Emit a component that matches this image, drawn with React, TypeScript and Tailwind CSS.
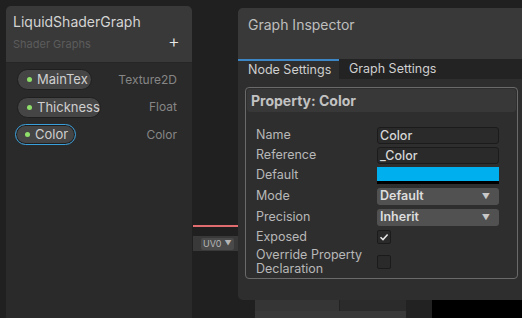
import React from "react";

const font = { fontFamily: "Inter, 'Noto Sans', sans-serif" };

function Pill({ name, w, selected }: { name: string; w: number; selected?: boolean }) {
  return (
    <div
      className={
        "flex items-center h-[21px] rounded-full bg-[#454545] pl-[9px] " +
        (selected ? "border border-[#3aa0dc] shadow-[0_0_0_1px_#1e1e1e_inset]" : "border border-[#1f1f1f]")
      }
      style={{ width: w }}
    >
      <span className="w-[5px] h-[5px] shrink-0 rounded-full bg-[#8fe06a] mr-[5px]" />
      <span className="text-[13px] text-[#cfcfcf] leading-none">{name}</span>
    </div>
  );
}

function Row({ label, children, h = 20, top }: { label: React.ReactNode; children: React.ReactNode; h?: number; top?: boolean }) {
  return (
    <div className={"flex " + (top ? "items-start" : "items-center")} style={{ height: h }}>
      <div className="w-[121px] text-[12.5px] leading-[14px] text-[#b8b8b8]">{label}</div>
      <div className="w-[122px]">{children}</div>
    </div>
  );
}

export default function App() {
  return (
    <div className="relative w-[522px] h-[318px] overflow-hidden bg-[#202020]" style={font}>
      {/* underlying graph canvas pieces */}
      <div className="absolute left-[193px] top-[225px] w-[45px] h-[2px] bg-[#e06c70]" />
      <div className="absolute left-[193px] top-[236px] w-[45px] h-[15px] bg-[#393939] flex items-center pl-[8px]">
        <div className="flex items-center h-[12px] px-[2px] bg-[#4a4a4a] rounded-[2px] text-[9px] text-[#b5b5b5] leading-none">
          UV0<span className="ml-[3px] text-[7px]">▼</span>
        </div>
      </div>
      <div className="absolute left-[255px] top-[300px] w-[177px] h-[18px] bg-[#222]">
        <div className="flex h-[11px]">
          <div className="w-[84px] bg-[#353535]" />
          <div className="w-[1px] bg-[#222]" />
          <div className="w-[66px] bg-[#2b2b2b]" />
        </div>
        <div className="w-[151px] h-[7px] bg-[#393939]" />
      </div>
      <div className="absolute left-[432px] top-[300px] w-[90px] h-[18px] bg-black" />

      {/* Blackboard */}
      <div className="absolute left-[6px] top-[6px] w-[186px] h-[330px] rounded-[5px] bg-[#2a2a2a] overflow-hidden">
        <div className="h-[57px] bg-[#393939] relative border-b border-[#262626]">
          <div className="absolute left-[7px] top-[5px] text-[14px] text-[#d4d4d4]">LiquidShaderGraph</div>
          <div className="absolute left-[7px] top-[30px] text-[11px] text-[#5c5c5c]">Shader Graphs</div>
          <div className="absolute left-[162px] top-[25px] text-[18px] text-[#e8e8e8] font-light leading-[22px]">+</div>
        </div>
        <div className="flex flex-col gap-[6.5px] pl-[11px] pr-[15px] pt-[6px]">
          <div className="flex items-center justify-between">
            <Pill name="MainTex" w={75} />
            <span className="text-[12px] text-[#868686]">Texture2D</span>
          </div>
          <div className="flex items-center justify-between">
            <Pill name="Thickness" w={84} />
            <span className="text-[12px] text-[#868686]">Float</span>
          </div>
          <div className="flex items-center justify-between -ml-[2px]">
            <Pill name="Color" w={61} selected />
            <span className="text-[12px] text-[#868686]">Color</span>
          </div>
        </div>
      </div>

      {/* Graph Inspector */}
      <div className="absolute left-[238px] top-[8px] w-[300px] h-[292px] rounded-[5px] bg-[#2e2e2e] overflow-hidden flex flex-col">
        <div className="h-[51px] bg-[#393939] pl-[10px] pt-[6px] text-[14px] text-[#bebebe]">Graph Inspector</div>
        <div className="flex h-[20px] bg-[#232323]">
          <div className="w-[101px] bg-[#2e2e2e] border-t-2 border-[#3d86c6] text-[12.5px] text-[#cfcfcf] pl-[10px] leading-[17px]">
            Node Settings
          </div>
          <div className="pl-[10px] text-[12.5px] text-[#cfcfcf] leading-[20px]">Graph Settings</div>
        </div>
        <div className="ml-[7px] mt-[8px] w-[273px] h-[192px] rounded-[4px] border border-[#6a6a6a] p-[1px] flex flex-col">
          <div className="h-[23px] rounded-[3px] bg-[#383838] pl-[4px] text-[14px] font-bold text-[#c2c2c2] leading-[24px]">
            Property: Color
          </div>
          <div className="pl-[9px] pt-[13px] flex flex-col">
            <Row label="Name">
              <div className="h-[17px] rounded-[3px] bg-[#2a2a2a] border border-[#1b1b1b] text-[12.5px] font-medium text-[#d6d6d6] pl-[2px] leading-[15px]">Color</div>
            </Row>
            <Row label="Reference">
              <div className="h-[17px] rounded-[3px] bg-[#2a2a2a] border border-[#1b1b1b] text-[12.5px] font-medium text-[#d6d6d6] pl-[2px] leading-[15px]">_Color</div>
            </Row>
            <Row label="Default">
              <div className="h-[17px] flex flex-col">
                <div className="h-[14px] bg-[#00b0ee]" />
                <div className="h-[3px] bg-black" />
              </div>
            </Row>
            <Row label="Mode" h={22}>
              <div className="h-[17px] rounded-[3px] bg-[#515151] flex items-center justify-between pl-[3px] pr-[9px] text-[12.5px] font-semibold text-[#dedede]">
                Default<span className="text-[8px] text-[#c8c8c8]">▼</span>
              </div>
            </Row>
            <Row label="Precision" h={20}>
              <div className="h-[17px] rounded-[3px] bg-[#515151] flex items-center justify-between pl-[3px] pr-[9px] text-[12.5px] font-semibold text-[#dedede]">
                Inherit<span className="text-[8px] text-[#c8c8c8]">▼</span>
              </div>
            </Row>
            <Row label="Exposed" h={20}>
              <div className="w-[14px] h-[14px] rounded-[2px] bg-[#2a2a2a] border border-[#1b1b1b] flex items-center justify-center">
                <svg width="10" height="10" viewBox="0 0 10 10">
                  <path d="M1.5 5.2 L4 7.6 L8.6 2.4" stroke="#e6e6e6" strokeWidth="1.5" fill="none" />
                </svg>
              </div>
            </Row>
            <Row label={<span className="block pt-[1px] leading-[13.5px]">Override Property<br />Declaration</span>} h={34} top>
              <div className="w-[14px] h-[14px] rounded-[2px] bg-[#2a2a2a] border border-[#1b1b1b] mt-[8px]" />
            </Row>
          </div>
        </div>
      </div>
    </div>
  );
}
